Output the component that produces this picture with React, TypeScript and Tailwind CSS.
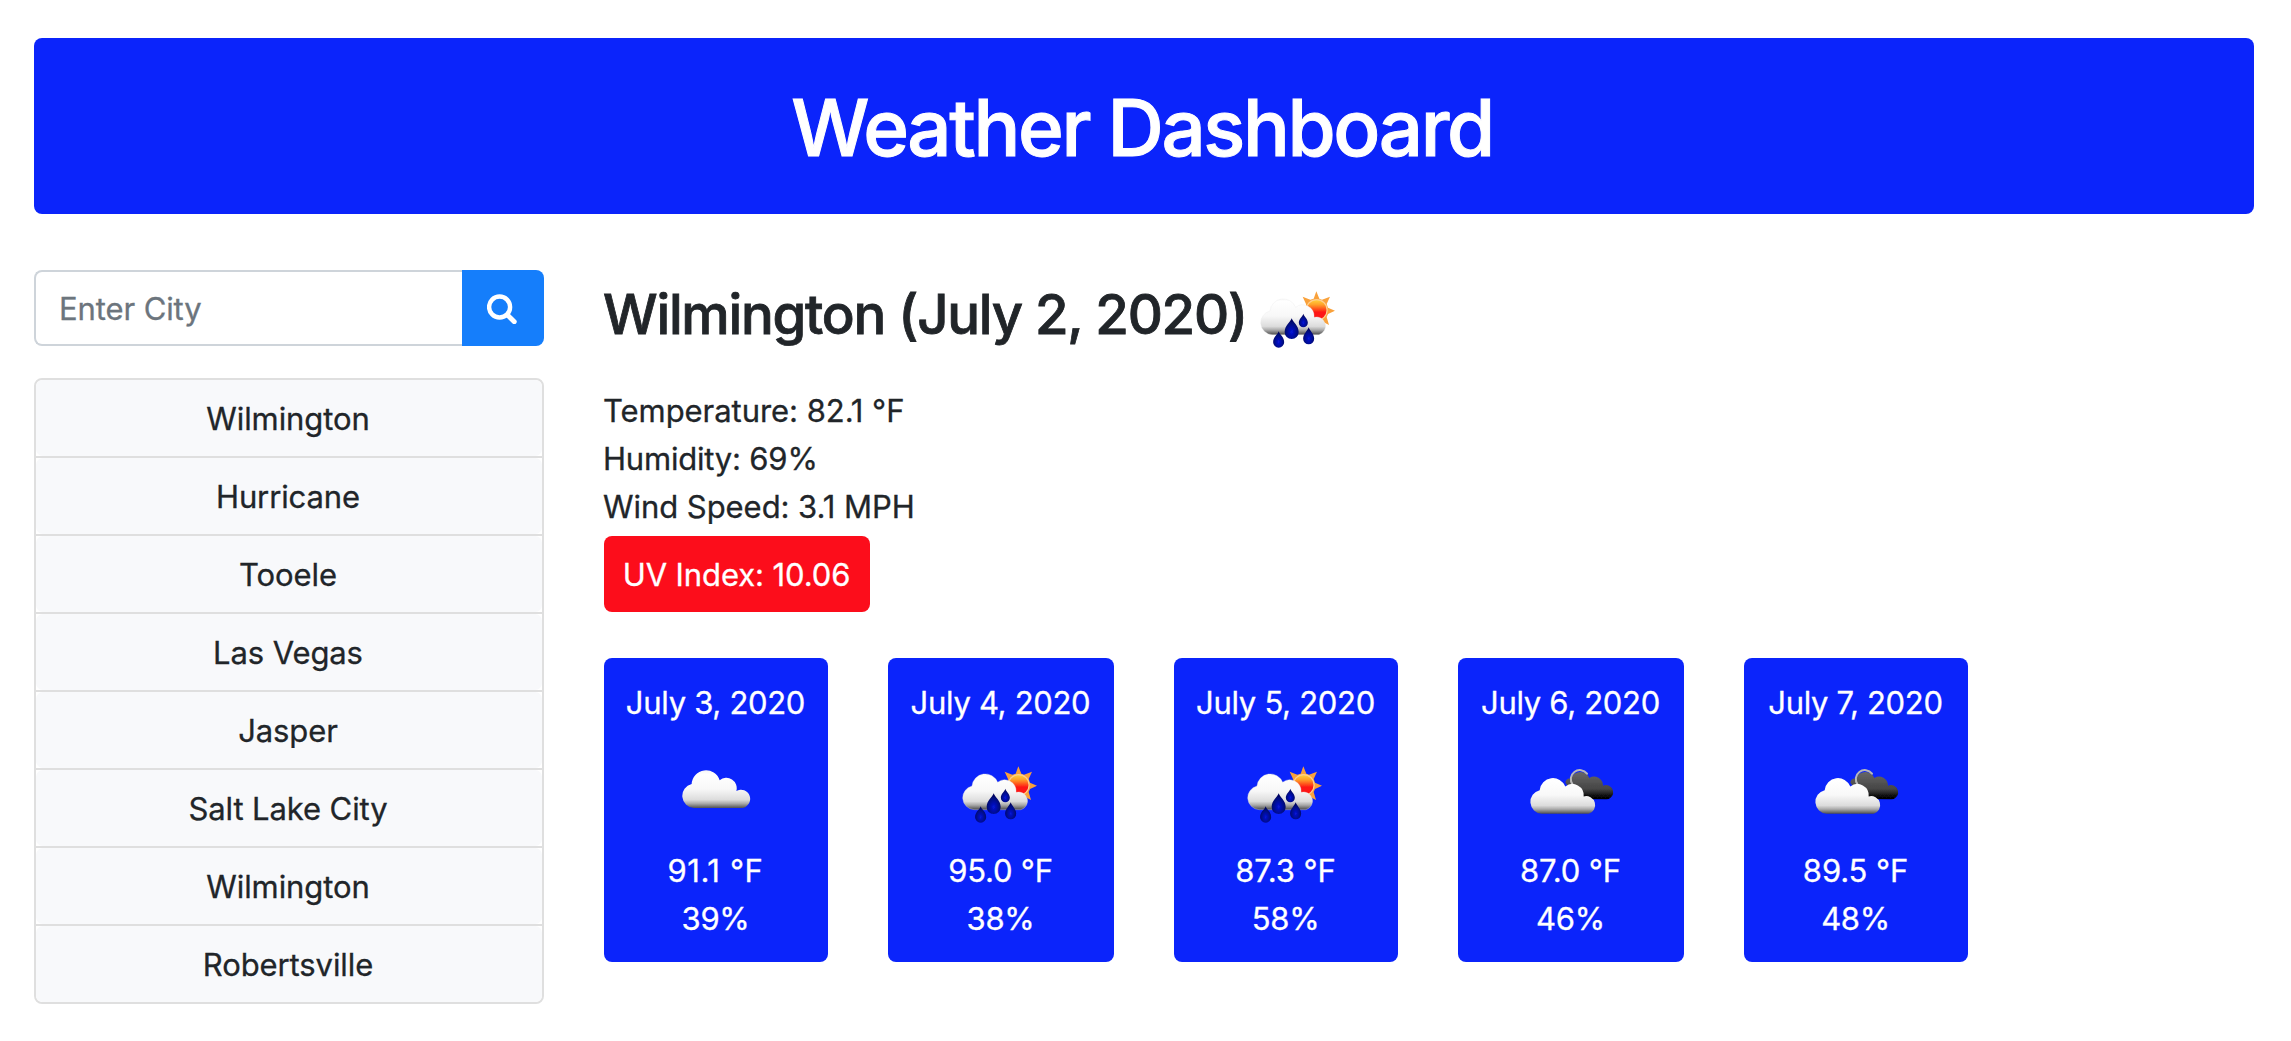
type IconKind = "cloud" | "rain" | "broken";

const cities = [
  "Wilmington",
  "Hurricane",
  "Tooele",
  "Las Vegas",
  "Jasper",
  "Salt Lake City",
  "Wilmington",
  "Robertsville",
];

const forecast: { date: string; icon: IconKind; temp: string; humidity: string; width: string; tempTracking: string }[] = [
  { date: "July 3, 2020", icon: "cloud", temp: "91.1 °F", humidity: "39%", width: "w-[224px]", tempTracking: "tracking-[0.6px]" },
  { date: "July 4, 2020", icon: "rain", temp: "95.0 °F", humidity: "38%", width: "w-[226px]", tempTracking: "tracking-[-0.2px]" },
  { date: "July 5, 2020", icon: "rain", temp: "87.3 °F", humidity: "58%", width: "w-[224px]", tempTracking: "tracking-[-0.1px]" },
  { date: "July 6, 2020", icon: "broken", temp: "87.0 °F", humidity: "46%", width: "w-[226px]", tempTracking: "tracking-[-0.1px]" },
  { date: "July 7, 2020", icon: "broken", temp: "89.5 °F", humidity: "48%", width: "w-[224px]", tempTracking: "tracking-[-0.1px]" },
];

function Defs({ id, top, bottom }: { id: string; top: number; bottom: number }) {
  return (
    <defs>
      <linearGradient id={id + "-c"} gradientUnits="userSpaceOnUse" x1="0" y1={top} x2="0" y2={bottom}>
        <stop offset="0" stopColor="#f4f4f4" />
        <stop offset="0.12" stopColor="#ffffff" />
        <stop offset="0.5" stopColor="#f8f8f8" />
        <stop offset="0.78" stopColor="#dcdcdc" />
        <stop offset="0.88" stopColor="#a8a8a8" />
        <stop offset="1" stopColor="#4c4c4c" />
      </linearGradient>
      <linearGradient id={id + "-d"} gradientUnits="userSpaceOnUse" x1="0" y1="92" x2="0" y2="177">
        <stop offset="0" stopColor="#6a6a6a" />
        <stop offset="0.65" stopColor="#454545" />
        <stop offset="0.9" stopColor="#0c0c0c" />
        <stop offset="1" stopColor="#000000" />
      </linearGradient>
      <linearGradient id={id + "-s"} gradientUnits="userSpaceOnUse" x1="0" y1="105" x2="0" y2="162">
        <stop offset="0" stopColor="#ffd23c" />
        <stop offset="0.25" stopColor="#ffa02a" />
        <stop offset="0.5" stopColor="#ff4a1c" />
        <stop offset="0.65" stopColor="#fd1414" />
        <stop offset="1" stopColor="#fd1414" />
      </linearGradient>
      <radialGradient id={id + "-r"} cx="0.5" cy="0.66" r="0.55">
        <stop offset="0" stopColor="#0714d8" />
        <stop offset="0.4" stopColor="#050ea8" />
        <stop offset="1" stopColor="#020560" />
      </radialGradient>
      <filter id={id + "-b"} x="-10%" y="-10%" width="120%" height="120%">
        <feGaussianBlur stdDeviation="2" />
      </filter>
    </defs>
  );
}

const FRONT_CLOUD =
  "M103 209 A36 36 0 0 1 97 138 A40 40 0 0 1 174 127 A34 34 0 0 1 229 157 A27 27 0 1 1 244 209 Z";

function Drop({ x, top, bottom, r, fill }: { x: number; top: number; bottom: number; r: number; fill: string }) {
  const cy = bottom - r;
  return (
    <path
      fill={fill}
      d={`M${x} ${top} C${x + 3} ${top + 10} ${x + r} ${cy - r * 0.9} ${x + r} ${cy} A${r} ${r} 0 0 1 ${x - r} ${cy} C${x - r} ${cy - r * 0.9} ${x - 3} ${top + 10} ${x} ${top} Z`}
    />
  );
}

function WeatherIcon({ kind, id }: { kind: IconKind; id: string }) {
  const cloud = `url(#${id}-c)`;
  const drop = `url(#${id}-r)`;
  if (kind === "cloud") {
    return (
      <svg className="block size-[100px] shrink-0" viewBox="19 -42 300 300">
        <Defs id={id} top={89} bottom={205} />
        <g filter={`url(#${id}-b)`}>
          <path
            fill={cloud}
            d="M103 204 A36.500 36.500 0 0 1 96 132 A43 43 0 0 1 180 121 A31 31 0 0 1 230 153 A27.500 27.500 0 1 1 247 204 Z"
          />
        </g>
      </svg>
    );
  }
  if (kind === "broken") {
    return (
      <svg className="block size-[100px] shrink-0" viewBox="34 -42 300 300">
        <Defs id={id} top={96} bottom={209} />
        <g filter={`url(#${id}-b)`}>
          <path
            fill={`url(#${id}-d)`}
            d="M190 177 L172 134 A10 10 0 0 1 184 118 A29 29 0 0 1 239 114 A27 27 0 0 1 280 137 A21.500 21.500 0 1 1 290 178 Z"
          />
          <path d="M189 134 A26 26 0 0 1 232 101" fill="none" stroke="#b9b9b9" strokeWidth="6" strokeLinecap="round" />
          <path fill={cloud} transform="translate(-7 12.500)" d={FRONT_CLOUD} />
        </g>
      </svg>
    );
  }
  return (
    <svg className="block size-[100px] shrink-0" viewBox="34 -42 300 300">
      <Defs id={id} top={96} bottom={209} />
      <g filter={`url(#${id}-b)`}>
        <path
          fill="#f9a13a"
          d="M236 79 L245 101 L253 104 L277 95 L267 117 L271 128 L292 137 L271 147 L267 156 L274 180 L251 168 L220 166 L206 125 L205 117 L195 95 L218 104 L228 101 Z"
        />
        <circle cx="237" cy="135" r="33" fill="#ffcf90" />
        <circle cx="237" cy="135" r="29.500" fill={`url(#${id}-s)`} />
        <path fill={cloud} stroke="#e6e6e6" strokeWidth="1" d={FRONT_CLOUD} />
        <Drop x={123} top={199} bottom={248} r={16.5} fill={drop} />
        <Drop x={162} top={160} bottom={222} r={21} fill={drop} />
        <Drop x={197} top={146} bottom={187} r={13.5} fill={drop} />
        <Drop x={213} top={187} bottom={238} r={16.5} fill={drop} />
      </g>
    </svg>
  );
}

export default function App() {
  return (
    <div className="h-[1041px] overflow-hidden bg-white px-[34px] pt-[38px] font-['Inter',sans-serif] text-[31px] leading-[48px] text-[#212529] [-webkit-text-stroke:0.3px]">
      <header className="mr-[3px] flex h-[176px] items-center justify-center rounded-[8px] bg-[#0b24fb]">
        <h1 className="pt-[4px] pr-[4px] text-[78px] font-medium tracking-[-2.4px] text-white [-webkit-text-stroke:1px]">
          Weather Dashboard
        </h1>
      </header>

      <div className="mt-[37px] flex">
        <aside className="mr-[59px] w-[510px] shrink-0 pt-[19px]">
          <div className="flex h-[76px]">
            <input
              className="min-w-0 flex-1 rounded-l-[8px] border-2 border-r-0 border-[#ced4da] pt-[2px] pl-[23px] tracking-[-0.1px] outline-none placeholder:text-[#6c757d]"
              placeholder="Enter City"
            />
            <button className="flex w-[82px] items-center justify-center rounded-r-[8px] bg-[#157efb]" aria-label="Search">
              <svg className="mt-[2px] mr-[2px] size-[30px]" viewBox="0 0 30 30" fill="none" stroke="#fff">
                <circle cx="12.600" cy="13" r="10.500" strokeWidth="4.400" />
                <path d="M20.500 21 L27.300 27.800" strokeWidth="4.800" strokeLinecap="round" />
              </svg>
            </button>
          </div>
          <ul className="mt-[32px] divide-y-2 divide-[#dfdfdf] rounded-[8px] border-2 border-[#dfdfdf]">
            {cities.map((city, i) => (
              <li key={i}>
                <div className="flex h-[76px] items-center justify-center rounded-[7px] bg-[#f8f9fb] pt-[2px] pr-[2px] tracking-[-0.1px]">
                  {city}
                </div>
              </li>
            ))}
          </ul>
        </aside>

        <main>
          <div className="flex h-[100px] items-center">
            <h2 className="w-[646px] pt-[26px] text-[54.5px] font-medium tracking-[-1.25px] whitespace-nowrap [-webkit-text-stroke:0.8px]">
              Wilmington (July 2, 2020)
            </h2>
            <WeatherIcon kind="rain" id="now" />
          </div>
          <div className="mt-[36px] tracking-[-0.05px]">
            <p>Temperature: 82.1 °F</p>
            <p className="tracking-[-0.2px]">Humidity: 69%</p>
            <p>Wind Speed: 3.1 MPH</p>
          </div>
          <div className="mt-[5px] ml-[1px] flex h-[76px] w-[266px] items-center justify-center rounded-[8px] bg-[#fc0d1b] pt-[2px] pr-px tracking-[-0.1px] text-white">
            UV Index: 10.06
          </div>
          <div className="mt-[46px] ml-[1px] flex gap-[60px]">
            {forecast.map((day, i) => (
              <section
                key={i}
                className={`${day.width} flex h-[304px] flex-col items-center rounded-[8px] bg-[#0b24fb] pt-[21px] pr-px tracking-[-0.3px] whitespace-nowrap text-white`}
              >
                <p>{day.date}</p>
                <div className="-mt-px">
                  <WeatherIcon kind={day.icon} id={"day" + i} />
                </div>
                <p className={`${day.tempTracking} mt-[21px]`}>{day.temp}</p>
                <p>{day.humidity}</p>
              </section>
            ))}
          </div>
        </main>
      </div>
    </div>
  );
}
